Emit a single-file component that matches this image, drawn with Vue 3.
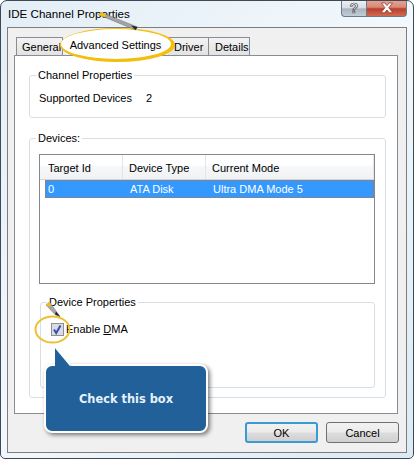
<template>
  <div class="win">
    <div class="titlebar">
      <span class="title">IDE Channel Properties</span>
      <div class="caps">
        <div class="cap help">?</div>
        <div class="cap close">
          <svg width="18" height="12" viewBox="0 0 18 12"><path d="M3.500 1h3.500l2 2.600 2-2.600h3.500l-3.700 4.700 3.900 5h-3.600L9 8l-2.400 2.700H3l3.900-5z" fill="#fff" stroke="#8a2a1e" stroke-width=".7"/></svg>
        </div>
      </div>
    </div>
    <div class="client">
      <div class="tabs">
        <div class="tab first">General</div>
        <div class="tab active">Advanced Settings</div>
        <div class="tab driver">Driver</div>
        <div class="tab details">Details</div>
      </div>
      <div class="page">
        <fieldset class="group chan">
          <legend>Channel Properties</legend>
          <div class="sup"><span class="suplabel">Supported Devices</span><span>2</span></div>
        </fieldset>
        <fieldset class="group dev">
          <legend>Devices:</legend>
          <div class="list">
            <div class="head">
              <div class="c1">Target Id</div>
              <div class="c2">Device Type</div>
              <div class="c3">Current Mode</div>
            </div>
            <div class="row">
              <div class="c1">0</div>
              <div class="c2">ATA Disk</div>
              <div class="c3">Ultra DMA Mode 5</div>
            </div>
          </div>
          <fieldset class="group props">
            <legend>Device Properties</legend>
            <div class="check">
              <span class="box">
                <svg width="11" height="11" viewBox="0 0 11 11"><path d="M2 5.500l2.200 3.500 4.300-7.500" fill="none" stroke="#3a4fa8" stroke-width="2"/></svg>
              </span>
              <span>Enable <u>D</u>MA</span>
            </div>
          </fieldset>
        </fieldset>
      </div>
      <div class="buttons">
        <div class="btn ok">OK</div>
        <div class="btn">Cancel</div>
      </div>
    </div>

    <svg class="overlay" width="414" height="459" viewBox="0 0 414 459">
      <ellipse cx="117.500" cy="45" rx="57.500" ry="17" fill="#f3bf0c"/>
      <ellipse cx="116" cy="44" rx="55" ry="15" fill="#fff"/>
      <path d="M98 14.500l3-2 36.500 14.500-2 3z" fill="#a3a3a3" stroke="#6f6f6f" stroke-width=".5"/>
      <path d="M98 14.500l3-2 6 2.400-2.500 2.400z" fill="#f3bf0c"/>
      <path d="M131 25.500l6.500 1.500-2 3z" fill="#222"/>
      <ellipse cx="52.500" cy="329.500" rx="17" ry="13" fill="none" stroke="#ecc033" stroke-width="2"/>
      <path d="M46 305l3.500-3 10.500 14.500-5-2z" fill="#a8a8a8" stroke="#6f6f6f" stroke-width=".5"/>
      <path d="M46 305l3.500-3 1.800 2.500-3 2.500z" fill="#f3bf0c"/>
      <path d="M56 311.500l4 5-5-2z" fill="#222"/>
    </svg>

    <div class="callout">Check this box</div>
    <svg class="tail" width="20" height="22" viewBox="0 0 20 22"><path d="M1 22V1l16 19v2z" fill="#22609a"/><path d="M1 1l15.500 18.500" stroke="#fff" stroke-width="1.500" fill="none"/></svg>
  </div>
</template>

<script setup>
</script>

<style>
html, body { margin: 0; background: #fff; }
</style>

<style scoped>
.win {
  position: relative;
  width: 414px;
  height: 459px;
  box-sizing: border-box;
  border: 1px solid #3c4a56;
  border-radius: 7px 7px 5px 5px;
  background: linear-gradient(135deg, #e4eef6 0%, #f2f8fd 50%, #dceaf4 100%);
  padding: 0 6px 5px;
  display: flex;
  flex-direction: column;
  font-family: "Liberation Sans", Arial, sans-serif;
  font-size: 11px;
  color: #000;
  overflow: hidden;
}
.titlebar {
  height: 26px;
  display: flex;
  justify-content: space-between;
  flex: none;
}
.title {
  font-size: 11.600px;
  line-height: 14px;
  margin-top: 6px;
  padding-left: 1px;
}
.caps { display: flex; height: 17px; margin-top: -1px; }
.cap {
  display: flex;
  align-items: center;
  justify-content: center;
  box-sizing: border-box;
  border: 1px solid #6c7a86;
  border-top: none;
}
.help {
  width: 25px;
  border-radius: 0 0 0 4px;
  border-right: none;
  background: linear-gradient(#eef3f7 0%, #d6dee6 50%, #a9b4bf 55%, #c3cdd6 100%);
  color: #fff;
  -webkit-text-stroke: .7px #444;
  font-size: 14px;
  line-height: 15px;
  font-weight: bold;
}
.close {
  width: 41px;
  border-radius: 0 0 4px 0;
  background: linear-gradient(#e8a596 0%, #d88877 45%, #b8402c 55%, #d06a50 100%);
}
.client {
  flex: 1;
  background: #f0f0f0;
  border: 1px solid #7d7d7d;
  display: flex;
  flex-direction: column;
  padding: 9px 8px 0 6px;
  min-height: 0;
}
.tabs {
  display: flex;
  height: 18px;
  flex: none;
  padding-left: 2px;
}
.tab {
  box-sizing: border-box;
  border: 1px solid #898c95;
  border-bottom: none;
  border-left: none;
  background: linear-gradient(#f3f3f3, #e2e2e2);
  line-height: 19px;
  height: 18px;
  white-space: nowrap;
}
.tab.first { width: 47px; padding-left: 5px; border-left: 1px solid #898c95; }
.tab.active {
  width: 105px;
  height: 20px;
  margin-top: -2px;
  background: transparent;
  border: none;
  text-align: center;
  line-height: 20px;
  position: relative;
  z-index: 2;
}
.tab.driver { width: 41px; padding-left: 6px; }
.tab.details { width: 41px; padding-left: 6px; }
.page {
  box-sizing: border-box;
  height: 359px;
  background: #fff;
  border: 1px solid #898c95;
  padding: 12px 11px 0 14px;
  flex: none;
}
.group {
  margin: 0;
  padding: 0;
  border: 1px solid #d5dfe5;
  border-radius: 3px;
  min-width: 0;
  box-sizing: border-box;
}
legend {
  margin-left: 6px;
  padding: 0 2px;
  line-height: 14px;
}
.chan { height: 50px; }
.sup { display: flex; padding: 9px 0 0 9px; line-height: 15px; }
.suplabel { width: 107px; }
.dev { height: 267px; margin-top: 13px; padding: 9px 10px 0 9px; }
.dev > legend { margin-left: -3px; }
.list {
  box-sizing: border-box;
  height: 130px;
  border: 1px solid #828790;
}
.head {
  display: flex;
  height: 25px;
  background: linear-gradient(#fff 0%, #fff 40%, #f5f7f9 50%, #f0f2f4 100%);
  border-bottom: 1px solid #d5d5d5;
  line-height: 27px;
  box-sizing: border-box;
}
.head div { border-right: 1px solid #e3e5e7; }
.c1 { width: 83px; padding-left: 8px; box-sizing: border-box; }
.c2 { width: 83px; padding-left: 6px; box-sizing: border-box; }
.c3 { flex: 1; padding-left: 6px; box-sizing: border-box; }
.row {
  display: flex;
  margin: 0 0 0 5px;
  height: 18px;
  box-sizing: border-box;
  background: #3399ff;
  color: #fff;
  border: 1px dotted #c8702a;
  line-height: 17px;
}
.row .c1 { width: 78px; padding-left: 2px; }
.props {
  height: 93px;
  margin: 11px 0 0 1px;
  padding: 13px 0 0 10px;
}
.props > legend { margin-left: -4px; }
.check { display: flex; align-items: center; gap: 2px; line-height: 15px; }
.box {
  width: 13px;
  height: 13px;
  box-sizing: border-box;
  border: 1px solid #8e8f8f;
  background: #d8dce8;
  display: flex;
  align-items: center;
  justify-content: center;
}
.buttons {
  display: flex;
  justify-content: flex-end;
  gap: 8px;
  margin: 8px -1px 0 0;
}
.btn {
  width: 73px;
  height: 21px;
  box-sizing: border-box;
  border: 1px solid #707070;
  border-radius: 3px;
  background: linear-gradient(#f2f2f2 0%, #ebebeb 48%, #dddddd 52%, #cfcfcf 100%);
  text-align: center;
  line-height: 20px;
}
.btn.ok {
  border: 2px solid #3c9ad2;
  line-height: 18px;
}
.overlay { position: absolute; left: -1px; top: -1px; pointer-events: none; }
.callout {
  position: absolute;
  left: 43px;
  top: 363px;
  width: 164px;
  height: 69px;
  box-sizing: border-box;
  background: #22609a;
  border: 2px solid #fff;
  border-radius: 8px;
  box-shadow: 2px 2px 4px rgba(0, 0, 0, .5);
  color: #e6f2fb;
  font-family: "DejaVu Sans", sans-serif;
  font-weight: bold;
  font-size: 11.400px;
  display: flex;
  align-items: center;
  justify-content: center;
}
.tail { position: absolute; left: 53px; top: 345px; }
</style>
